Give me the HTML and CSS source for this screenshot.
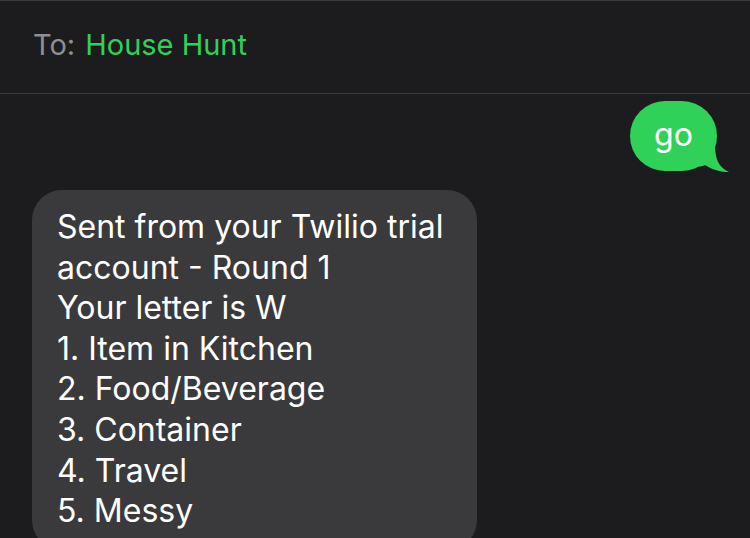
FILE: index.html
```html
<!DOCTYPE html>
<html>
<head>
<meta charset="utf-8">
<link rel="stylesheet" href="styles.css">
</head>
<body>
<div class="screen">
  <header class="header">
    <span class="to-label">To:</span>
    <span class="to-name">House Hunt</span>
  </header>
  <main class="thread">
    <div class="row row-out">
      <div class="bubble bubble-out">
        go
        <svg class="tail" width="34" height="34" viewBox="0 0 34 34"><path d="M0 0 L18 0 L18 6 C18 20 21 29 32 34 C24 34.5 14 31 8 27 C5 28.5 2 29 0 28 Z" fill="#30d158"/></svg>
      </div>
    </div>
    <div class="row row-in">
      <div class="bubble bubble-in">Sent from your Twilio trial<br>account - Round 1<br>Your letter is W<br>1. Item in Kitchen<br>2. Food/Beverage<br>3. Container<br>4. Travel<br>5. Messy</div>
    </div>
  </main>
</div>
</body>
</html>
```
FILE: styles.css
```css
html, body {
  margin: 0;
  padding: 0;
  background: #1c1c1e;
}
.screen {
  width: 750px;
  height: 538px;
  overflow: hidden;
  background: #1c1c1e;
  font-family: Inter, "Noto Sans", sans-serif;
  border-top: 1px solid #3a3a3c;
  box-sizing: border-box;
}
.header {
  height: 93px;
  box-sizing: border-box;
  border-bottom: 1px solid #3a3a3c;
  display: flex;
  align-items: center;
  padding: 0 0 5px 33px;
  font-size: 29px;
  gap: 10px;
}
.to-label { color: #8e8e93; }
.to-name { color: #30d158; }
.thread {
  display: flex;
  flex-direction: column;
  padding: 7px 33px 0 32px;
}
.row { display: flex; }
.row-out { justify-content: flex-end; }
.bubble {
  position: relative;
  color: #fff;
  font-size: 32px;
  line-height: 40.6px;
}
.bubble-out {
  background: #30d158;
  border-radius: 35px;
  width: 87px;
  height: 70px;
  box-sizing: border-box;
  display: flex;
  align-items: center;
  justify-content: center;
  padding-bottom: 1px;
}
.tail {
  position: absolute;
  right: -14px;
  bottom: -1px;
}
.bubble-in {
  margin-top: 19px;
  background: #3a3a3c;
  border-radius: 30px;
  width: 445px;
  box-sizing: border-box;
  padding: 17px 25px 18px;
}
```
